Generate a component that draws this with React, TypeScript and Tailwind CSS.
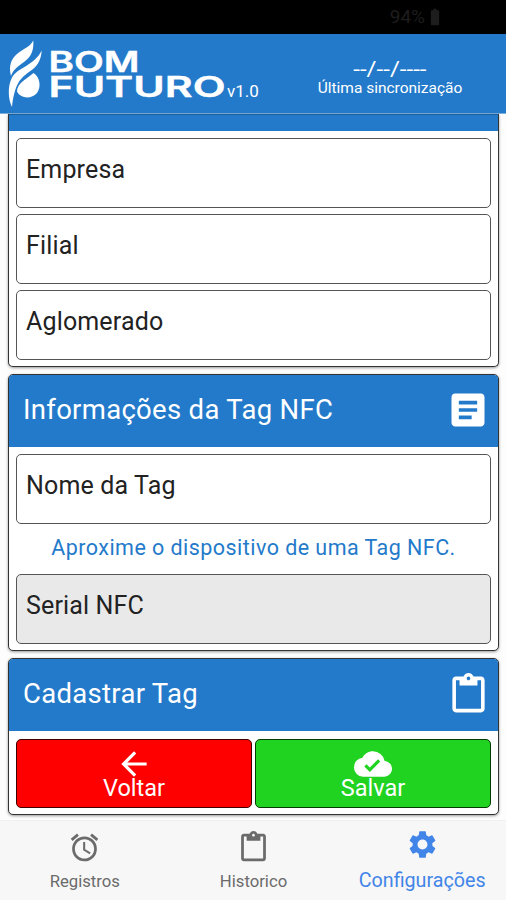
import type { ReactNode } from "react";
import type { IconType } from "react-icons";
import {
  MdAccessAlarm,
  MdArrowBack,
  MdArticle,
  MdBatteryFull,
  MdCloudDone,
  MdContentPaste,
  MdSettings,
} from "react-icons/md";

const tabs = [
  { name: "Registros", icon: MdAccessAlarm, active: false },
  { name: "Historico", icon: MdContentPaste, active: false },
  { name: "Configurações", icon: MdSettings, active: true },
];

function Logo() {
  return (
    <svg viewBox="0 0 230 79" className="h-[79px] w-[230px] shrink-0" fill="#fff">
      <path d="M33.300 6.500C34 17 31 23 24 28C17 33 13 36 11 42C8.500 32 11 25 17 20C24 14 29 14 33.300 6.500Z" />
      <path d="M41.700 16.500C41 27 37 33 29 38C19 45 14.500 52 12 73C8 65 7.500 52 12 43.500C18 33 34 32 41.700 16.500Z" />
      <path d="M33.500 39C40 43 41.500 53 37 59C31 66 20 64 17 57.500C17.500 49 25 46 33.500 39Z" />
      <g fontFamily="Inter, 'Liberation Sans', sans-serif" fontWeight="600" stroke="#fff" strokeWidth="0.4">
        <text x="48.500" y="38" fontSize="28.500" textLength="91" lengthAdjust="spacingAndGlyphs">
          BOM
        </text>
        <text x="48.500" y="63" fontSize="28.500" textLength="177" lengthAdjust="spacingAndGlyphs">
          FUTURO
        </text>
      </g>
    </svg>
  );
}

function Header() {
  return (
    <header className="flex h-20 shrink-0 border-b border-[#7db0dc] bg-[#247aca] text-white">
      <Logo />
      <span className="-ml-[3px] mt-[47px] text-[17px] leading-5">v1.0</span>
      <div className="ml-auto mr-[34px] flex w-[164px] flex-col items-center pt-[25px]">
        <span className="scale-x-[1.15] text-[21px] leading-5">--/--/----</span>
        <span className="text-[15.5px] leading-[18px] whitespace-nowrap">Última sincronização</span>
      </div>
    </header>
  );
}

function Card({ title, icon, children }: { title: string; icon: ReactNode; children: ReactNode }) {
  return (
    <section className="overflow-hidden rounded-[5px] border border-[#333] bg-white shadow-[0_1px_3px_rgba(0,0,0,0.4)]">
      <div className="flex h-[72px] items-center justify-between bg-[#247aca] pr-2 pl-[14px] text-white">
        <h2 className="pb-[3px] text-[27.5px] tracking-[0.3px]">{title}</h2>
        {icon}
      </div>
      {children}
    </section>
  );
}

function Field({ label, disabled = false }: { label: string; disabled?: boolean }) {
  return (
    <div
      className={`h-[70px] rounded-[5px] border border-[#555] pt-[15px] pl-[9px] text-[25px] leading-8 tracking-[0.15px] text-[#222] ${
        disabled ? "bg-[#e9e9e9]" : "bg-white"
      }`}
    >
      {label}
    </div>
  );
}

function ActionButton({ label, icon: Icon, color }: { label: string; icon: IconType; color: string }) {
  return (
    <button className={`flex h-[69px] flex-col items-center rounded-[5px] border pt-[5px] text-white ${color}`}>
      <Icon className="size-[38px] shrink-0" />
      <span className="-mt-[9px] text-[23.5px] leading-7">{label}</span>
    </button>
  );
}

export default function App() {
  return (
    <div className="flex h-[900px] w-[506px] flex-col overflow-hidden bg-[#fdfdfd] font-[Roboto,'Liberation_Sans',sans-serif]">
      <div className="flex h-[34px] shrink-0 items-center justify-end bg-black pr-[61px] text-[#1d1d1d]">
        <span className="text-[19px]">94%</span>
        <MdBatteryFull className="size-[20px]" />
      </div>
      <Header />

      <main className="flex flex-1 flex-col gap-[7px] pr-[7px] pl-2">
        <section className="rounded-b-[5px] border border-t-0 border-[#333] bg-white shadow-[0_1px_3px_rgba(0,0,0,0.4)]">
          <div className="h-[17px] border-t border-[#1c5f9f] bg-[#247aca]" />
          <div className="flex flex-col gap-1.5 p-[7px] pb-1.5">
            <Field label="Empresa" />
            <Field label="Filial" />
            <Field label="Aglomerado" />
          </div>
        </section>

        <Card title="Informações da Tag NFC" icon={<MdArticle className="mb-[3px] size-[44px]" />}>
          <div className="flex flex-col p-[7px] pb-1.5">
            <Field label="Nome da Tag" />
            <p className="h-[50px] text-center text-[21.5px] leading-[48px] tracking-[0.45px] text-[#247aca]">
              Aproxime o dispositivo de uma Tag NFC.
            </p>
            <Field label="Serial NFC" disabled />
          </div>
        </Card>

        <Card title="Cadastrar Tag" icon={<MdContentPaste className="mb-px size-[43px]" />}>
          <div className="grid grid-cols-2 gap-[3px] p-[7px] pt-2 pb-1.5">
            <ActionButton label="Voltar" icon={MdArrowBack} color="border-[#400000] bg-[#fe0000]" />
            <ActionButton label="Salvar" icon={MdCloudDone} color="border-[#053c05] bg-[#20d320]" />
          </div>
        </Card>
      </main>

      <nav className="grid h-20 shrink-0 grid-cols-3 border-t border-[#f0f0f0] bg-[#f7f7f7]">
        {tabs.map(({ name, icon: Icon, active }) => (
          <a
            key={name}
            className={`flex flex-col items-center pl-px ${active ? "pt-[7px] text-[#4285e8]" : "pt-[10px] text-[#6b6b6b]"}`}
          >
            <Icon className="size-[33px]" />
            <span className={active ? "mt-1.5 text-[19.7px] leading-7" : "mt-1.5 text-[16.7px] leading-6"}>{name}</span>
          </a>
        ))}
      </nav>
    </div>
  );
}
